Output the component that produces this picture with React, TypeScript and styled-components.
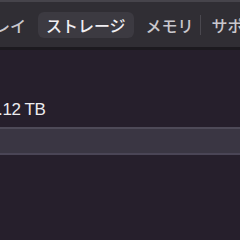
import styled, { createGlobalStyle } from 'styled-components';

const GlobalStyle = createGlobalStyle`
  html, body {
    margin: 0;
    padding: 0;
    background: #261f2c;
    overflow: hidden;
  }
`;

interface TabData {
  label: string;
  selected?: boolean;
  divider?: boolean;
}

const tabs: TabData[] = [
  { label: 'ディスプレイ' },
  { label: 'ストレージ', selected: true },
  { label: 'メモリ', divider: true },
  { label: 'サポート' },
];

const App = () => {
  return (
    <Window>
      <GlobalStyle />
      <Toolbar>
        <TabList>
          {tabs.map((tab) => (
            <TabItem key={tab.label}>
              <TabButton selected={!!tab.selected}>{tab.label}</TabButton>
              {tab.divider && <Divider />}
            </TabItem>
          ))}
        </TabList>
      </Toolbar>
      <Content>
        <Capacity>1.12 TB</Capacity>
        <UsageBar />
      </Content>
    </Window>
  );
};

const Window = styled.div`
  width: 240px;
  height: 240px;
  overflow: hidden;
  background: #261f2c;
  font-family: 'Noto Sans CJK JP', 'Noto Sans', sans-serif;
`;

const Toolbar = styled.div`
  height: 45px;
  background: #302e34;
  border-top: 2px solid #46444b;
  border-bottom: 3px solid #1c1a1f;
  display: flex;
  align-items: flex-start;
  overflow: hidden;
`;

const TabList = styled.ul`
  list-style: none;
  margin: 10px 0 0 -77px;
  padding: 0;
  display: flex;
  gap: 4px;
  flex-wrap: nowrap;
`;

const TabItem = styled.li`
  display: flex;
  align-items: center;
`;

const TabButton = styled.div<{ selected: boolean }>`
  height: 26px;
  padding: 0 8px;
  border-radius: 6px;
  display: flex;
  align-items: center;
  font-size: 16px;
  font-weight: 500;
  white-space: nowrap;
  color: ${(props) => (props.selected ? '#f1eff3' : '#c9c7cd')};
  background: ${(props) => (props.selected ? '#3c3a41' : 'transparent')};
`;

const Divider = styled.span`
  width: 1px;
  height: 20px;
  margin: 0 -1px 0 -2px;
  background: #4a484f;
`;

const Content = styled.div`
  padding-top: 48px;
  display: flex;
  flex-direction: column;
`;

const Capacity = styled.div`
  margin-left: -11px;
  height: 24px;
  line-height: 24px;
  font-family: 'Liberation Sans', Arial, sans-serif;
  font-size: 17px;
  letter-spacing: -0.4px;
  color: #ecebef;
`;

const UsageBar = styled.div`
  margin-top: 5px;
  height: 24px;
  background: #3a3643;
  border-top: 2px solid #4e4a58;
  border-bottom: 2px solid #4a4556;
`;

export default App;
